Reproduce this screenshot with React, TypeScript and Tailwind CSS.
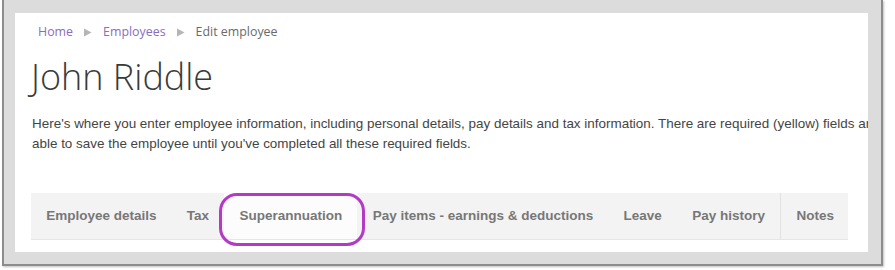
import React from "react";

const Tri = () => (
  <svg width="8" height="9" viewBox="0 0 8 9" className="mx-[11px]">
    <path d="M0 0.5 L7.5 4.5 L0 8.5 Z" fill="#b5b5b5" />
  </svg>
);

const tabs = [
  "Employee details",
  "Tax",
  "Superannuation",
  "Pay items - earnings & deductions",
  "Leave",
  "Pay history",
  "Notes",
];

export default function App() {
  return (
    <div className="relative w-[895px] h-[270px] bg-white overflow-hidden">
      <div className="ml-[2px] w-[881px] h-[266px] border-l-2 border-r-2 border-b-2 border-[#8c8c8c] bg-[#dcdcdc] pt-[13px] pl-[11px] pr-[13px] pb-[12px] shadow-[1px_1px_2px_rgba(0,0,0,0.25)]">
        <div className="w-full h-full bg-white overflow-hidden">
          <div
            className="pt-[11px] pl-[23px] flex items-center h-[27px] text-[12.4px] leading-[16px]"
            style={{ fontFamily: '"Open Sans", sans-serif' }}
          >
            <span className="text-[#8a6cc0]">Home</span>
            <Tri />
            <span className="text-[#8a6cc0]">Employees</span>
            <Tri />
            <span className="text-[#6a6a6a]">Edit employee</span>
          </div>
          <h1
            className="mt-[15px] pl-[16px] text-[36px] leading-[44px] font-light text-[#3a3a3a]"
            style={{ fontFamily: '"Open Sans", sans-serif' }}
          >
            John Riddle
          </h1>
          <p
            className="mt-[15px] pl-[17px] text-[13.45px] leading-[20px] text-[#444] whitespace-nowrap"
            style={{ fontFamily: '"Liberation Sans", Arial, sans-serif' }}
          >
            Here's where you enter employee information, including personal details, pay details and tax information. There are required (yellow) fields and you won't be
            <br />
            able to save the employee until you've completed all these required fields.
          </p>
          <div className="mt-[39px] ml-[16px] w-[817px] border-b border-[#e6e6e6]">
            <div
              className="flex h-[46px] bg-[#f3f3f3] text-[13.5px] font-bold text-[#777] whitespace-nowrap overflow-hidden"
              style={{ fontFamily: '"Liberation Sans", Arial, sans-serif' }}
            >
              {tabs.map((t) => (
                <div
                  key={t}
                  className={
                    "flex shrink-0 items-center pt-[1px] px-[15.2px] " +
                    (t === "Superannuation" ? "bg-[#fcfcfc] " : "") +
                    (t === "Notes" ? "border-l border-[#e2e2e2] " : "")
                  }
                >
                  {t}
                </div>
              ))}
            </div>
          </div>
        </div>
      </div>
      <div className="absolute left-[219px] top-[193px] w-[146px] h-[53px] rounded-[18px] border-[3px] border-[#b43ac6]" />
    </div>
  );
}
